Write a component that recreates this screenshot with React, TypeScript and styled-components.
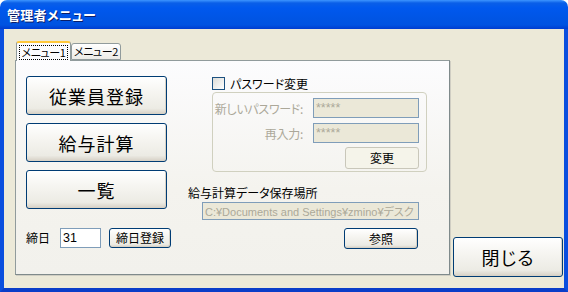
import styled, { createGlobalStyle } from 'styled-components';

const GlobalStyle = createGlobalStyle`
  html, body {
    margin: 0;
    padding: 0;
    background: #ffffff;
  }
  body {
    font-family: "Noto Sans CJK JP", "Liberation Sans", sans-serif;
    font-size: 12px;
    font-feature-settings: "palt";
    color: #000000;
  }
`;

const Window = styled.div`
  width: 568px;
  height: 292px;
  display: flex;
  flex-direction: column;
`;

const TitleBar = styled.div`
  height: 29px;
  flex: none;
  box-sizing: border-box;
  padding-left: 7px;
  display: flex;
  align-items: center;
  border-radius: 7px 7px 0 0;
  background: linear-gradient(
    to bottom,
    #3d95ff 0px,
    #0a5fe8 3px,
    #0058ee 8px,
    #0055e5 18px,
    #0053e1 25px,
    #003dd0 29px
  );
  color: #ffffff;
  font-weight: bold;
  font-size: 13px;
  text-shadow: 1px 1px 0 #0a1e6a;
  letter-spacing: 0.3px;
`;

const Body = styled.div`
  flex: 1;
  display: flex;
  align-items: flex-start;
  background: #ece9d8;
  border-left: 4px solid #0a4ede;
  border-right: 4px solid #0a4ede;
  border-bottom: 4px solid #0a3dc8;
  padding: 12px 1px 0 11px;
  box-sizing: border-box;
`;

const TabArea = styled.div`
  width: 435px;
  display: flex;
  flex-direction: column;
`;

const TabRow = styled.div`
  height: 19px;
  display: flex;
  align-items: flex-end;
  padding-left: 1px;
  position: relative;
  z-index: 1;
`;

const Tab = styled.div<{ $active?: boolean }>`
  box-sizing: border-box;
  height: ${(p) => (p.$active ? '20px' : '17px')};
  margin-bottom: ${(p) => (p.$active ? '-1px' : '0')};
  width: ${(p) => (p.$active ? '55px' : '50px')};
  border: 1px solid #919b9c;
  border-bottom: ${(p) => (p.$active ? 'none' : '1px solid #919b9c')};
  border-top: ${(p) => (p.$active ? '2px solid #ffc83c' : '1px solid #919b9c')};
  border-radius: 3px 3px 0 0;
  background: ${(p) =>
    p.$active ? '#fcfcfe' : 'linear-gradient(to bottom, #ffffff, #ecebe6)'};
  display: flex;
  align-items: center;
  justify-content: center;
  white-space: nowrap;
  font-size: 11px;
  letter-spacing: -0.4px;
  line-height: 13px;
`;

const FocusLabel = styled.span`
  outline: 1px dotted #000;
  padding: 0 1px;
`;

const Panel = styled.div`
  box-sizing: border-box;
  height: 215px;
  border: 1px solid #919b9c;
  border-right-color: #7f8a8b;
  border-bottom-color: #7f8a8b;
  box-shadow: 1px 1px 0 #d0cec3;
  background: linear-gradient(to bottom, #fcfcfe, #f4f3ee 60%, #f2f1ec);
  padding: 15px 0 0 10px;
  display: flex;
`;

const LeftCol = styled.div`
  width: 141px;
  display: flex;
  flex-direction: column;
  gap: 8px;
`;

const XpButton = styled.button<{ $big?: boolean; $w?: number; $h?: number }>`
  box-sizing: border-box;
  width: ${(p) => (p.$w ? `${p.$w}px` : '100%')};
  height: ${(p) => (p.$h ? `${p.$h}px` : '39px')};
  border: 1px solid #003c74;
  border-radius: 3px;
  background: linear-gradient(to bottom, #ffffff 0%, #f6f5f1 40%, #ecebe4 85%, #d6d0c5 100%);
  box-shadow: inset -1px -1px 0 #d8d2c6;
  font-family: "Noto Sans CJK JP", "Liberation Sans", sans-serif;
  font-feature-settings: "palt";
  font-size: ${(p) => (p.$big ? '18px' : '12px')};
  letter-spacing: ${(p) => (p.$big ? '1px' : '0')};
  color: #000;
  padding: 0;
  line-height: 1;
  display: flex;
  align-items: center;
  justify-content: center;
  white-space: nowrap;
  &:disabled {
    border-color: #c9c7ba;
    background: #f5f4ea;
    box-shadow: none;
    color: #000;
  }
`;

const CutoffRow = styled.div`
  margin-top: 11px;
  display: flex;
  align-items: center;
  gap: 8px;
  width: 170px;
`;

const CutoffLabel = styled.span`
  width: 26px;
  line-height: 20px;
`;

const TextBox = styled.div<{ $disabled?: boolean; $w: number; $h?: number; $small?: boolean }>`
  box-sizing: border-box;
  width: ${(p) => p.$w}px;
  height: ${(p) => (p.$h ? `${p.$h}px` : '20px')};
  border: 1px solid #7f9db9;
  background: ${(p) => (p.$disabled ? '#ebe8d8' : '#ffffff')};
  color: ${(p) => (p.$disabled ? '#aca899' : '#000')};
  padding: 0 2px;
  display: flex;
  align-items: center;
  white-space: nowrap;
  overflow: hidden;
  font-family: "Liberation Sans", "Noto Sans CJK JP", sans-serif;
  font-size: ${(p) => (p.$small ? '11px' : '12.5px')};
`;

const RightCol = styled.div`
  margin-left: 21px;
  width: 231px;
  display: flex;
  flex-direction: column;
`;

const CheckRow = styled.label`
  margin-left: 24px;
  display: flex;
  align-items: center;
  gap: 5px;
  height: 15px;
  line-height: 15px;
`;

const CheckBox = styled.span`
  width: 13px;
  height: 13px;
  box-sizing: border-box;
  border: 1px solid #1c5180;
  background: linear-gradient(135deg, #dcdcd7 0%, #ffffff 100%);
`;

const GroupBox = styled.div`
  margin: 1px 0 0 24px;
  box-sizing: border-box;
  width: 215px;
  height: 80px;
  border: 1px solid #d0d0bf;
  border-radius: 4px;
  padding: 5px 7px 0 0;
  display: grid;
  grid-template-columns: 90px 106px;
  grid-auto-rows: 20px;
  column-gap: 10px;
  row-gap: 5px;
`;

const FieldLabel = styled.span`
  color: #aca899;
  display: flex;
  justify-content: flex-end;
  align-items: center;
  white-space: nowrap;
  letter-spacing: -0.3px;
`;

const ButtonCell = styled.div`
  grid-column: 2;
  display: flex;
  justify-content: flex-end;
  margin-top: -1px;
`;

const PathLabel = styled.div`
  margin-top: 13px;
  line-height: 16px;
`;

const PathBox = styled.div`
  margin: 1px 0 0 14px;
`;

const BrowseRow = styled.div`
  margin-top: 8px;
  width: 230px;
  display: flex;
  justify-content: flex-end;
`;

const CloseCol = styled.div`
  margin-left: 3px;
  padding-top: 196px;
  width: 110px;
`;

export default function App() {
  return (
    <>
      <GlobalStyle />
      <Window>
        <TitleBar>管理者メニュー</TitleBar>
        <Body>
          <TabArea>
            <TabRow>
              <Tab $active>
                <FocusLabel>メニュー1</FocusLabel>
              </Tab>
              <Tab>メニュー2</Tab>
            </TabRow>
            <Panel>
              <LeftCol>
                <XpButton $big>従業員登録</XpButton>
                <XpButton $big>給与計算</XpButton>
                <XpButton $big>一覧</XpButton>
                <CutoffRow>
                  <CutoffLabel>締日</CutoffLabel>
                  <TextBox $w={41}>31</TextBox>
                  <XpButton $w={62} $h={20}>締日登録</XpButton>
                </CutoffRow>
              </LeftCol>
              <RightCol>
                <CheckRow>
                  <CheckBox />
                  パスワード変更
                </CheckRow>
                <GroupBox>
                  <FieldLabel>新しいパスワード:</FieldLabel>
                  <TextBox $w={106} $disabled>*****</TextBox>
                  <FieldLabel>再入力:</FieldLabel>
                  <TextBox $w={106} $disabled>*****</TextBox>
                  <ButtonCell>
                    <XpButton $w={74} $h={22} disabled>変更</XpButton>
                  </ButtonCell>
                </GroupBox>
                <PathLabel>給与計算データ保存場所</PathLabel>
                <PathBox>
                  <TextBox $w={217} $h={18} $disabled $small>
                    C:¥Documents and Settings¥zmino¥デスク
                  </TextBox>
                </PathBox>
                <BrowseRow>
                  <XpButton $w={74} $h={21}>参照</XpButton>
                </BrowseRow>
              </RightCol>
            </Panel>
          </TabArea>
          <CloseCol>
            <XpButton $big $h={40}>閉じる</XpButton>
          </CloseCol>
        </Body>
      </Window>
    </>
  );
}
